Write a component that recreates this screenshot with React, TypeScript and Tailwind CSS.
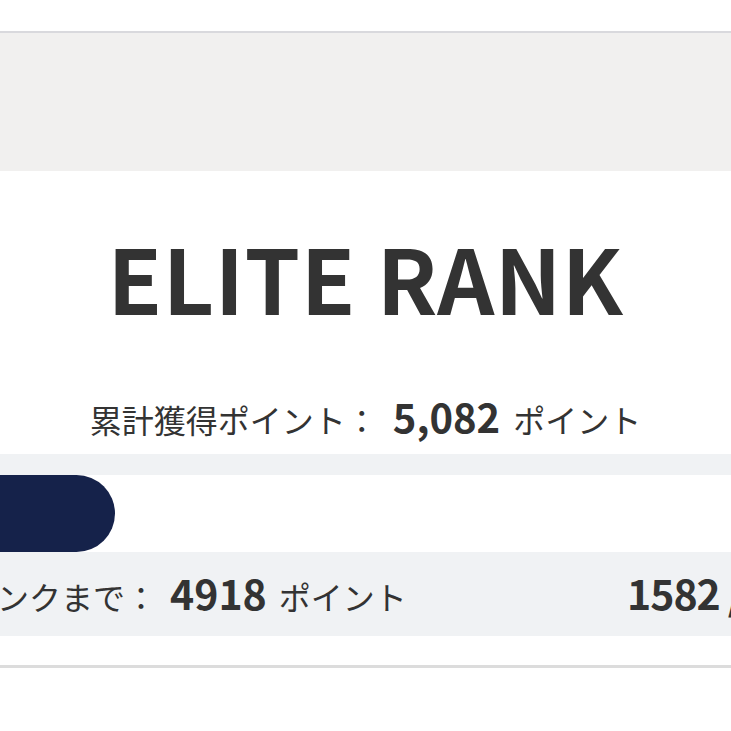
export default function App() {
  const progress = 31;

  return (
    <div className="w-[731px] h-[731px] overflow-hidden bg-white text-[#333333] font-['Noto_Sans_CJK_JP','Noto_Sans',sans-serif]">
      <div className="h-[31px]" />
      <div className="h-[140px] border-t-2 border-[#d9d9dd] bg-[#f1f0ef]" />

      <section className="flex flex-col items-center pt-[46px]">
        <h1 className="text-[89px] font-bold leading-[120px] tracking-[0.5px]">ELITE RANK</h1>
        <p className="mt-[59px] flex items-baseline text-[32px] leading-[40px]">
          <span>累計獲得ポイント：</span>
          <span className="ml-[15px] text-[40px] font-bold">5,082</span>
          <span className="ml-[13px]">ポイント</span>
        </p>
      </section>

      <div className="mt-[15px] bg-[#f0f2f4] pt-[21px]">
        <div className="h-[77px] bg-white -ml-[40px] w-[1000px]">
          <div className="h-full rounded-full bg-[#15224a]" style={{ width: `${progress * 5}px` }} />
        </div>
        <div className="flex h-[84px] items-center -ml-[99px] w-[1200px] pb-[2px]">
          <p className="flex w-[726px] shrink-0 items-baseline text-[32px]">
            <span>次のランクまで：</span>
            <span className="ml-[13px] text-[41px] font-bold">4918</span>
            <span className="ml-[12px]">ポイント</span>
          </p>
          <p className="flex items-baseline text-[32px]">
            <span className="text-[41px] font-bold tracking-[-1px]">1582</span>
            <span className="ml-[8px] text-[41px] font-bold">/ 5000</span>
            <span className="ml-[10px]">ポイント</span>
          </p>
        </div>
      </div>

      <div className="h-[29px]" />
      <div className="border-t-[3px] border-[#dcdcdc]" />
    </div>
  );
}
